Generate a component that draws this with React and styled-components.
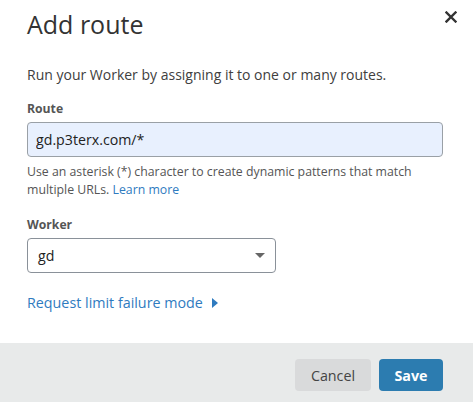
import React from "react";
import styled, { createGlobalStyle } from "styled-components";

const Global = createGlobalStyle`
  html, body { margin: 0; padding: 0; background: #fff; }
  body { font-family: "Open Sans", "Liberation Sans", sans-serif; }
  * { box-sizing: border-box; }
`;

const App = () => {
  return (
    <>
      <Global />
      <Dialog>
        <Body>
          <Header>
            <Title>Add route</Title>
            <Close aria-label="Close">
              <svg width="12" height="12" viewBox="0 0 12 12">
                <path d="M1.5 1.5 L10.5 10.5 M10.5 1.5 L1.5 10.5" stroke="#333" strokeWidth="2.4" strokeLinecap="square" />
              </svg>
            </Close>
          </Header>
          <Intro>Run your Worker by assigning it to one or many routes.</Intro>
          <Field>
            <Label>Route</Label>
            <TextInput defaultValue="gd.p3terx.com/*" />
            <Help>
              Use an asterisk (*) character to create dynamic patterns that match multiple URLs.{" "}
              <Link>Learn more</Link>
            </Help>
          </Field>
          <Field>
            <Label>Worker</Label>
            <Select>
              <span>gd</span>
              <Caret />
            </Select>
          </Field>
          <Toggle>
            Request limit failure mode
            <Arrow />
          </Toggle>
        </Body>
        <Footer>
          <Button>Cancel</Button>
          <Button primary>Save</Button>
        </Footer>
      </Dialog>
    </>
  );
};

export default App;

const Dialog = styled.div`
  width: 473px;
  height: 402px;
  display: flex;
  flex-direction: column;
  background: #fff;
  color: #333;
`;

const Body = styled.div`
  flex: 1;
  padding: 6px 30px 0 27px;
`;

const Header = styled.div`
  display: flex;
  justify-content: space-between;
  align-items: flex-start;
`;

const Title = styled.h2`
  margin: 0;
  font-size: 25px;
  font-weight: 400;
  line-height: 36px;
  color: #333;
`;

const Close = styled.div`
  margin-top: 5px;
  margin-right: -14px;
  width: 12px;
  height: 12px;
  display: flex;
`;

const Intro = styled.p`
  margin: 22px 0 0;
  font-size: 14px;
  line-height: 22px;
  color: #404040;
`;

const Field = styled.div`
  margin-top: 14px;
  & + & { margin-top: 17px; }
`;

const Label = styled.div`
  font-size: 12.2px;
  font-weight: 700;
  line-height: 18px;
  color: #555;
  margin-bottom: 4px;
`;

const TextInput = styled.input`
  display: block;
  width: 416px;
  height: 35px;
  padding: 0 8px;
  border: 1px solid #9aa0a6;
  border-radius: 4px;
  background: #e8f0fe;
  font-family: inherit;
  font-size: 14.2px;
  color: #222;
  outline: none;
`;

const Help = styled.div`
  margin-top: 6px;
  font-size: 12.3px;
  line-height: 18px;
  color: #555;
  width: 416px;
`;

const Link = styled.a`
  color: #2f7bbf;
  cursor: pointer;
`;

const Select = styled.div`
  width: 249px;
  height: 35px;
  padding: 0 10px;
  border: 1px solid #8a9199;
  border-radius: 4px;
  display: flex;
  align-items: center;
  justify-content: space-between;
  font-size: 14.2px;
  color: #222;
`;

const Caret = styled.span`
  width: 0;
  height: 0;
  border-left: 5px solid transparent;
  border-right: 5px solid transparent;
  border-top: 5px solid #666;
`;

const Toggle = styled.div`
  margin-top: 20px;
  display: flex;
  align-items: center;
  gap: 9px;
  font-size: 14.3px;
  line-height: 20px;
  color: #2f7bbf;
`;

const Arrow = styled.span`
  width: 0;
  height: 0;
  border-top: 5px solid transparent;
  border-bottom: 5px solid transparent;
  border-left: 6px solid #2f7bbf;
`;

const Footer = styled.div`
  height: 59px;
  background: #e8eaea;
  display: flex;
  justify-content: flex-end;
  align-items: flex-start;
  gap: 8px;
  padding: 16px 30px 0 0;
`;

const Button = styled.button`
  height: 32px;
  padding: 0;
  width: ${(p) => (p.primary ? "64px" : "76px")};
  border: none;
  border-radius: 4px;
  font-family: inherit;
  font-size: 14.3px;
  font-weight: ${(p) => (p.primary ? 700 : 400)};
  background: ${(p) => (p.primary ? "#2c7cb0" : "#d9dadb")};
  color: ${(p) => (p.primary ? "#fff" : "#444")};
  cursor: pointer;
`;
